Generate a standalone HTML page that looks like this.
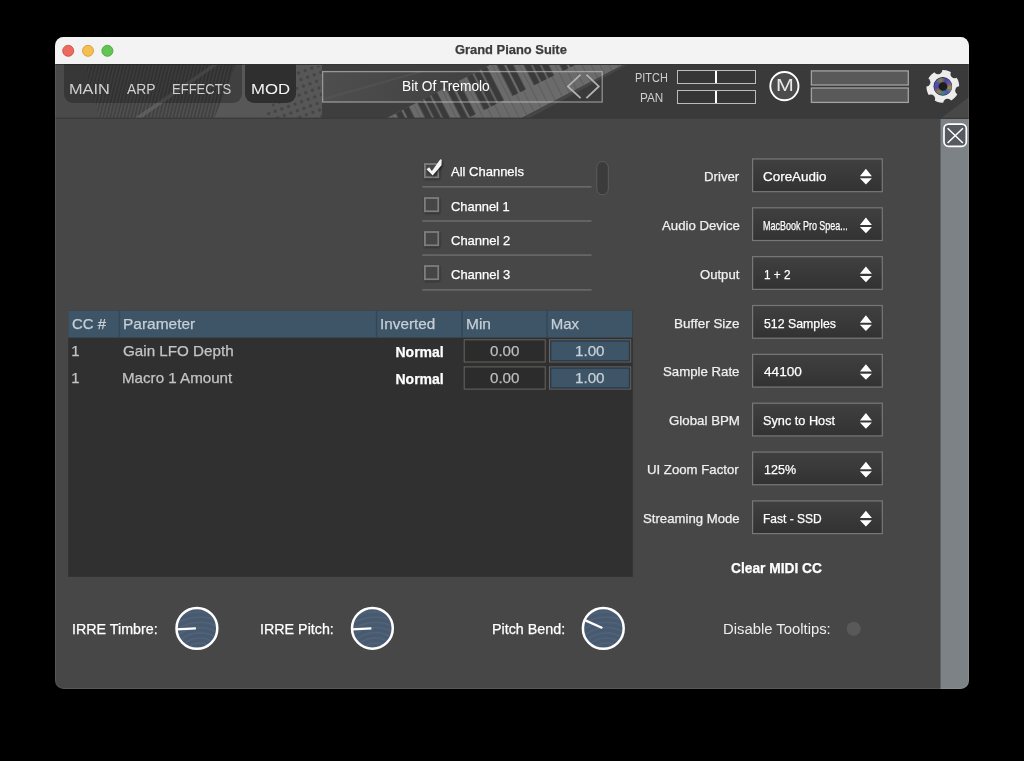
<!DOCTYPE html>
<html><head><meta charset="utf-8"><title>Grand Piano Suite</title>
<style>
html,body{margin:0;padding:0;background:#000;}
body{width:1024px;height:761px;position:relative;overflow:hidden;font-family:"Liberation Sans",sans-serif;}
.abs{position:absolute;box-sizing:border-box;}
.t{-webkit-text-stroke:0.25px currentColor;position:absolute;white-space:pre;transform-origin:0 0;font-family:"Liberation Sans",sans-serif;}
#win{left:55px;top:37px;width:914px;height:652px;border-radius:8.5px;overflow:hidden;background:#474747;}
#titlebar{left:0;top:0;width:914px;height:27px;background:#f3f3f3;}
#toolbar{left:0;top:27px;width:914px;height:55px;background:#3b3b3b;overflow:hidden;}
#strip{left:885px;top:82px;width:29px;height:570px;background:#7d8287;border-left:1px solid #5f6367;}
</style></head><body>
<div id="win" class="abs">
  <div id="titlebar" class="abs">
    <svg class="abs" style="left:0;top:0" width="70" height="27" viewBox="55 37 70 27">
      <circle cx="68.2" cy="50.8" r="5.5" fill="#ed6a5e" stroke="#d44d42" stroke-width="0.9"/>
      <circle cx="88" cy="50.8" r="5.5" fill="#f5bf4f" stroke="#d69e35" stroke-width="0.9"/>
      <circle cx="107.4" cy="50.8" r="5.5" fill="#61c554" stroke="#48a53c" stroke-width="0.9"/>
    </svg>
  </div>
  <div id="toolbar" class="abs">
    <svg class="abs" style="left:0;top:0" width="914" height="55" viewBox="55 64 914 55">
<defs>
<pattern id="wk" width="8" height="80" patternUnits="userSpaceOnUse" patternTransform="rotate(-27 500 90)">
<rect x="0" width="1" height="80" fill="#5d5d5d"/></pattern>
<pattern id="bk" width="56" height="200" patternUnits="userSpaceOnUse" patternTransform="rotate(-27 500 90)">
<rect x="4.5" width="6.3" height="200" fill="#3a3a3a"/><rect x="13" width="6.3" height="200" fill="#3a3a3a"/>
<rect x="28.5" width="6.3" height="200" fill="#3a3a3a"/><rect x="36.5" width="6.3" height="200" fill="#3a3a3a"/><rect x="44.5" width="6.3" height="200" fill="#3a3a3a"/></pattern>
<pattern id="str" width="3.4" height="80" patternUnits="userSpaceOnUse" patternTransform="rotate(14 150 90)">
<rect width="3.4" height="80" fill="#414141"/><rect x="0" width="1.4" height="80" fill="#525252"/></pattern>
<linearGradient id="boxg" x1="322" x2="480" y1="0" y2="0" gradientUnits="userSpaceOnUse"><stop offset="0" stop-color="#4e4e4e"/><stop offset="1" stop-color="#404040"/></linearGradient>
<pattern id="pins" width="7" height="7" patternUnits="userSpaceOnUse" patternTransform="rotate(-20 300 90)">
<circle cx="3.5" cy="3.5" r="1.7" fill="#444"/></pattern>
</defs>
<rect x="55" y="64" width="914" height="55" fill="#4a4a4a"/>
<polygon points="84,64 236,64 214,119 100,119" fill="url(#str)"/>
<polygon points="133,119 213,64 219,64 140,119" fill="#666" opacity=".7"/>
<polygon points="214,119 236,64 324,64 324,119" fill="#575757"/>
<polygon points="262,119 300,66 322,66 322,119" fill="url(#pins)"/>
<rect x="322" y="64" width="175" height="55" fill="#3e3e3e"/>
<rect x="322" y="71" width="170" height="31.5" fill="url(#boxg)"/>
<polygon points="322,98 420,71 426,71 322,101" fill="#585858" opacity=".5"/>
<polygon points="385,119 491.7,64 625,64 520,119" fill="#6b6b6b"/><polygon points="385,119 491.7,64 625,64 520,119" fill="url(#wk)"/><polygon points="385,119 491.7,64 577,64 466,119" fill="url(#bk)"/>
<polygon points="520,119 625,64 969,64 969,119" fill="#3a3a3a"/>
<polygon points="520,119 625,64 629,64 528,119" fill="#464646"/>
<polygon points="940,119 969,97 969,119" fill="#484848"/>
<rect x="55" y="64" width="914" height="1" fill="#353535"/>
<rect x="55" y="117.6" width="914" height="1.4" fill="#3b3b3b"/>
</svg>
<div class="abs" style="left:9.0px;top:0.0px;width:177.6px;height:38.8px;background:rgba(20,20,20,.34);border-radius:0 0 9px 9px;"></div>
<div class="abs" style="left:190.0px;top:0.0px;width:51.0px;height:39.0px;background:#2f2f2f;border-radius:0 0 9px 9px;"></div>
<svg class="abs" style="left:260px;top:0" width="300" height="50" viewBox="315 64 300 50"><rect x="322.6" y="71.6" width="279.6" height="30.4" fill="none" stroke="rgba(200,200,200,.6)" stroke-width="1.3"/></svg>
<svg class="abs" style="left:505px;top:5px" width="50" height="40" viewBox="560 69 50 40">
<path d="M580.6 74.6L567.9 86.4L580.6 98.2M586.4 74.6L598.8 86.4L586.4 98.2" stroke="#b2b2b2" stroke-width="1.8" fill="none"/></svg>
<div class="abs" style="left:622.0px;top:6.3px;width:79.4px;height:13.6px;border:1px solid #bcbcbc;background:#363636;"></div>
<div class="abs" style="left:660.4px;top:6.8px;width:2.0px;height:12.6px;background:#fff;"></div>
<div class="abs" style="left:622.0px;top:26.0px;width:79.4px;height:13.6px;border:1px solid #bcbcbc;background:#363636;"></div>
<div class="abs" style="left:660.4px;top:26.5px;width:2.0px;height:12.6px;background:#fff;"></div>
<svg class="abs" style="left:710px;top:3px" width="40" height="40" viewBox="765 67 40 40"><circle cx="784.4" cy="86.1" r="14.1" fill="#4c4c4c" stroke="#fff" stroke-width="1.9"/></svg>
<svg class="abs" style="left:750px;top:3px" width="110" height="40" viewBox="805 67 110 40"><rect x="811.4" y="70.9" width="96.9" height="14.1" fill="#595959" stroke="#a2a2a2" stroke-width="1.3"/><rect x="811.4" y="88" width="96.9" height="14.4" fill="#595959" stroke="#a2a2a2" stroke-width="1.3"/></svg>
<svg class="abs" style="left:865px;top:0" width="49" height="55" viewBox="920 64 49 55">
<defs><mask id="gm"><rect x="920" y="64" width="49" height="55" fill="#000"/><circle cx="942.8" cy="86.4" r="16.4" fill="#fff"/><circle cx="954.75" cy="74.03" r="4.3" fill="#000"/><circle cx="959.49" cy="90.56" r="4.3" fill="#000"/><circle cx="947.54" cy="102.93" r="4.3" fill="#000"/><circle cx="930.85" cy="98.77" r="4.3" fill="#000"/><circle cx="926.11" cy="82.24" r="4.3" fill="#000"/><circle cx="938.06" cy="69.87" r="4.3" fill="#000"/></mask></defs>
<rect x="920" y="64" width="49" height="55" fill="#ececec" mask="url(#gm)"/>
<circle cx="942.8" cy="86.4" r="9.3" fill="#23233f"/></svg>
<div class="abs" style="left:879.0px;top:13.6px;width:17.6px;height:17.6px;border-radius:50%;background:radial-gradient(circle,#1c1c1c 0,#1c1c1c 30%,rgba(28,28,28,0) 40%,rgba(28,28,40,0) 80%,rgba(25,25,50,.8) 100%),conic-gradient(from 20deg,#4446a4,#6a52a0,#9a8a44,#5058b0,#3a7a94,#8c7a48,#5a44a0,#4456b0,#94803e,#4446a4);"></div>
  </div>
  <div id="strip" class="abs"></div>
  <div class="abs" style="left:0;top:0;width:914px;height:652px;border-radius:8.5px;border:1px solid rgba(255,255,255,.09);"></div>
</div>
<svg class="abs" style="left:940px;top:120px" width="30" height="30" viewBox="940 120 30 30">
<rect x="944" y="124.1" width="22.3" height="22.2" rx="4.5" fill="#555a60" stroke="#fff" stroke-width="1.7"/>
<path d="M947.6 128.3L962.9 143M962.9 128.3L947.6 143" stroke="#fff" stroke-width="1.5" fill="none"/></svg>
<svg class="abs" style="left:415px;top:150px" width="185" height="145" viewBox="415 150 185 145"><defs><filter id="sh" x="-30%" y="-30%" width="170%" height="170%"><feGaussianBlur stdDeviation="0.9"/></filter></defs><rect x="425.6" y="165.10" width="13.4" height="13.3" fill="none" stroke="rgba(0,0,0,.45)" stroke-width="2" filter="url(#sh)"/><rect x="424.9" y="164.00" width="13.4" height="13.3" fill="#464646" stroke="#7e7e7e" stroke-width="1.8"/><rect x="422.3" y="186.00" width="169.2" height="1.6" fill="#6a6a6a"/><rect x="425.6" y="199.10" width="13.4" height="13.3" fill="none" stroke="rgba(0,0,0,.45)" stroke-width="2" filter="url(#sh)"/><rect x="424.9" y="198.00" width="13.4" height="13.3" fill="#464646" stroke="#7e7e7e" stroke-width="1.8"/><rect x="422.3" y="220.20" width="169.2" height="1.6" fill="#6a6a6a"/><rect x="425.6" y="233.10" width="13.4" height="13.3" fill="none" stroke="rgba(0,0,0,.45)" stroke-width="2" filter="url(#sh)"/><rect x="424.9" y="232.00" width="13.4" height="13.3" fill="#464646" stroke="#7e7e7e" stroke-width="1.8"/><rect x="422.3" y="254.30" width="169.2" height="1.6" fill="#6a6a6a"/><rect x="425.6" y="267.10" width="13.4" height="13.3" fill="none" stroke="rgba(0,0,0,.45)" stroke-width="2" filter="url(#sh)"/><rect x="424.9" y="266.00" width="13.4" height="13.3" fill="#464646" stroke="#7e7e7e" stroke-width="1.8"/><rect x="422.3" y="289.10" width="169.2" height="1.6" fill="#6a6a6a"/><polygon points="426.5,169.3 429.2,167.3 431.9,171.0 440.3,159.2 441.7,159.7 441.5,165.3 432.7,175.4" fill="rgba(0,0,0,.55)" transform="translate(0.8,1.6)" filter="url(#sh)"/><polygon points="426.5,169.3 429.2,167.3 431.9,171.0 440.3,159.2 441.7,159.7 441.5,165.3 432.7,175.4" fill="#f4f4f4"/></svg>
<svg class="abs" style="left:590px;top:155px" width="25" height="46" viewBox="590 155 25 46"><rect x="596.8" y="161.5" width="11.5" height="33.3" rx="5.75" fill="#3b3b3b" stroke="#5c5c5c" stroke-width="1"/></svg>
<svg class="abs" style="left:0;top:0" width="0" height="0"><defs><linearGradient id="ddg" x1="0" y1="0" x2="0" y2="1"><stop offset="0" stop-color="#404040"/><stop offset="1" stop-color="#323232"/></linearGradient></defs></svg>
<svg class="abs" style="left:748px;top:156px" width="140" height="40" viewBox="748 156 140 40"><rect x="752.6" y="158.95" width="129.7" height="32.7" fill="url(#ddg)" stroke="#787878" stroke-width="1.2"/><path d="M865.9 168.75L871.9 176.15H859.9Z M859.9 178.25H871.9L865.9 184.45Z" fill="#fff"/></svg>
<svg class="abs" style="left:748px;top:205px" width="140" height="40" viewBox="748 205 140 40"><rect x="752.6" y="207.80" width="129.7" height="32.7" fill="url(#ddg)" stroke="#787878" stroke-width="1.2"/><path d="M865.9 217.60L871.9 225.00H859.9Z M859.9 227.10H871.9L865.9 233.30Z" fill="#fff"/></svg>
<svg class="abs" style="left:748px;top:254px" width="140" height="40" viewBox="748 254 140 40"><rect x="752.6" y="256.65" width="129.7" height="32.7" fill="url(#ddg)" stroke="#787878" stroke-width="1.2"/><path d="M865.9 266.45L871.9 273.85H859.9Z M859.9 275.95H871.9L865.9 282.15Z" fill="#fff"/></svg>
<svg class="abs" style="left:748px;top:302px" width="140" height="40" viewBox="748 302 140 40"><rect x="752.6" y="305.50" width="129.7" height="32.7" fill="url(#ddg)" stroke="#787878" stroke-width="1.2"/><path d="M865.9 315.30L871.9 322.70H859.9Z M859.9 324.80H871.9L865.9 331.00Z" fill="#fff"/></svg>
<svg class="abs" style="left:748px;top:351px" width="140" height="40" viewBox="748 351 140 40"><rect x="752.6" y="354.35" width="129.7" height="32.7" fill="url(#ddg)" stroke="#787878" stroke-width="1.2"/><path d="M865.9 364.15L871.9 371.55H859.9Z M859.9 373.65H871.9L865.9 379.85Z" fill="#fff"/></svg>
<svg class="abs" style="left:748px;top:400px" width="140" height="40" viewBox="748 400 140 40"><rect x="752.6" y="403.20" width="129.7" height="32.7" fill="url(#ddg)" stroke="#787878" stroke-width="1.2"/><path d="M865.9 413.00L871.9 420.40H859.9Z M859.9 422.50H871.9L865.9 428.70Z" fill="#fff"/></svg>
<svg class="abs" style="left:748px;top:449px" width="140" height="40" viewBox="748 449 140 40"><rect x="752.6" y="452.05" width="129.7" height="32.7" fill="url(#ddg)" stroke="#787878" stroke-width="1.2"/><path d="M865.9 461.85L871.9 469.25H859.9Z M859.9 471.35H871.9L865.9 477.55Z" fill="#fff"/></svg>
<svg class="abs" style="left:748px;top:498px" width="140" height="40" viewBox="748 498 140 40"><rect x="752.6" y="500.90" width="129.7" height="32.7" fill="url(#ddg)" stroke="#787878" stroke-width="1.2"/><path d="M865.9 510.70L871.9 518.10H859.9Z M859.9 520.20H871.9L865.9 526.40Z" fill="#fff"/></svg>
<svg class="abs" style="left:60px;top:305px" width="580" height="280" viewBox="60 305 580 280"><rect x="68.2" y="310.6" width="564.6" height="266.2" fill="#303030"/><rect x="68.2" y="310.6" width="564.2" height="27" fill="#3e5568"/><rect x="118.7" y="310.6" width="1.4" height="27" fill="#33475a"/><rect x="375.8" y="310.6" width="1.4" height="27" fill="#33475a"/><rect x="461.2" y="310.6" width="1.4" height="27" fill="#33475a"/><rect x="546.3" y="310.6" width="1.4" height="27" fill="#33475a"/><rect x="464.2" y="339.8" width="81" height="22.2" fill="#2c2c2c" stroke="#69655f" stroke-width="1"/><rect x="549.5" y="339.8" width="81.2" height="22.2" fill="#3e5568" stroke="#69655f" stroke-width="1"/><rect x="550.7" y="341.0" width="78.8" height="19.8" fill="none" stroke="#2c3a48" stroke-width="1.3"/><rect x="464.2" y="366.9" width="81" height="22.2" fill="#2c2c2c" stroke="#69655f" stroke-width="1"/><rect x="549.5" y="366.9" width="81.2" height="22.2" fill="#3e5568" stroke="#69655f" stroke-width="1"/><rect x="550.7" y="368.1" width="78.8" height="19.8" fill="none" stroke="#2c3a48" stroke-width="1.3"/></svg>
<svg class="abs" style="left:172px;top:604px" width="48" height="48" viewBox="172 604 48 48">
<defs><clipPath id="k1"><circle cx="196.9" cy="628.4" r="20.4"/></clipPath></defs>
<circle cx="196.9" cy="628.4" r="20.4" fill="#485a70"/>
<g clip-path="url(#k1)"><circle cx="199.9" cy="662.4" r="14.0" stroke="#607487" stroke-width="1.7" fill="none" opacity=".32"/><circle cx="199.9" cy="662.4" r="19.2" stroke="#607487" stroke-width="1.7" fill="none" opacity=".32"/><circle cx="199.9" cy="662.4" r="24.4" stroke="#607487" stroke-width="1.7" fill="none" opacity=".32"/><circle cx="199.9" cy="662.4" r="29.6" stroke="#607487" stroke-width="1.7" fill="none" opacity=".32"/><circle cx="199.9" cy="662.4" r="34.8" stroke="#607487" stroke-width="1.7" fill="none" opacity=".32"/><circle cx="199.9" cy="662.4" r="40.0" stroke="#607487" stroke-width="1.7" fill="none" opacity=".32"/><circle cx="199.9" cy="662.4" r="45.2" stroke="#607487" stroke-width="1.7" fill="none" opacity=".32"/><circle cx="199.9" cy="662.4" r="50.4" stroke="#607487" stroke-width="1.7" fill="none" opacity=".32"/><circle cx="199.9" cy="662.4" r="55.6" stroke="#607487" stroke-width="1.7" fill="none" opacity=".32"/><circle cx="199.9" cy="662.4" r="60.8" stroke="#607487" stroke-width="1.7" fill="none" opacity=".32"/></g>
<circle cx="196.9" cy="628.4" r="20.4" fill="none" stroke="#fff" stroke-width="2.5"/>
<path d="M195.90 628.45L176.63 629.46" stroke="#fff" stroke-width="2.3"/></svg>
<svg class="abs" style="left:348px;top:604px" width="48" height="48" viewBox="348 604 48 48">
<defs><clipPath id="k2"><circle cx="372.4" cy="628.3" r="20.4"/></clipPath></defs>
<circle cx="372.4" cy="628.3" r="20.4" fill="#485a70"/>
<g clip-path="url(#k2)"><circle cx="375.4" cy="662.3" r="14.0" stroke="#607487" stroke-width="1.7" fill="none" opacity=".32"/><circle cx="375.4" cy="662.3" r="19.2" stroke="#607487" stroke-width="1.7" fill="none" opacity=".32"/><circle cx="375.4" cy="662.3" r="24.4" stroke="#607487" stroke-width="1.7" fill="none" opacity=".32"/><circle cx="375.4" cy="662.3" r="29.6" stroke="#607487" stroke-width="1.7" fill="none" opacity=".32"/><circle cx="375.4" cy="662.3" r="34.8" stroke="#607487" stroke-width="1.7" fill="none" opacity=".32"/><circle cx="375.4" cy="662.3" r="40.0" stroke="#607487" stroke-width="1.7" fill="none" opacity=".32"/><circle cx="375.4" cy="662.3" r="45.2" stroke="#607487" stroke-width="1.7" fill="none" opacity=".32"/><circle cx="375.4" cy="662.3" r="50.4" stroke="#607487" stroke-width="1.7" fill="none" opacity=".32"/><circle cx="375.4" cy="662.3" r="55.6" stroke="#607487" stroke-width="1.7" fill="none" opacity=".32"/><circle cx="375.4" cy="662.3" r="60.8" stroke="#607487" stroke-width="1.7" fill="none" opacity=".32"/></g>
<circle cx="372.4" cy="628.3" r="20.4" fill="none" stroke="#fff" stroke-width="2.5"/>
<path d="M371.40 628.35L352.13 629.36" stroke="#fff" stroke-width="2.3"/></svg>
<svg class="abs" style="left:579px;top:604px" width="48" height="48" viewBox="579 604 48 48">
<defs><clipPath id="k3"><circle cx="603.3" cy="628.4" r="20.4"/></clipPath></defs>
<circle cx="603.3" cy="628.4" r="20.4" fill="#485a70"/>
<g clip-path="url(#k3)"><circle cx="606.3" cy="662.4" r="14.0" stroke="#607487" stroke-width="1.7" fill="none" opacity=".32"/><circle cx="606.3" cy="662.4" r="19.2" stroke="#607487" stroke-width="1.7" fill="none" opacity=".32"/><circle cx="606.3" cy="662.4" r="24.4" stroke="#607487" stroke-width="1.7" fill="none" opacity=".32"/><circle cx="606.3" cy="662.4" r="29.6" stroke="#607487" stroke-width="1.7" fill="none" opacity=".32"/><circle cx="606.3" cy="662.4" r="34.8" stroke="#607487" stroke-width="1.7" fill="none" opacity=".32"/><circle cx="606.3" cy="662.4" r="40.0" stroke="#607487" stroke-width="1.7" fill="none" opacity=".32"/><circle cx="606.3" cy="662.4" r="45.2" stroke="#607487" stroke-width="1.7" fill="none" opacity=".32"/><circle cx="606.3" cy="662.4" r="50.4" stroke="#607487" stroke-width="1.7" fill="none" opacity=".32"/><circle cx="606.3" cy="662.4" r="55.6" stroke="#607487" stroke-width="1.7" fill="none" opacity=".32"/><circle cx="606.3" cy="662.4" r="60.8" stroke="#607487" stroke-width="1.7" fill="none" opacity=".32"/></g>
<circle cx="603.3" cy="628.4" r="20.4" fill="none" stroke="#fff" stroke-width="2.5"/>
<path d="M602.39 627.99L584.76 620.14" stroke="#fff" stroke-width="2.3"/></svg>
<svg class="abs" style="left:840px;top:615px" width="28" height="28" viewBox="840 615 28 28"><circle cx="853.7" cy="628.8" r="7.1" fill="#595959"/></svg>
<div id="txt" style="position:absolute;left:0;top:0;width:1024px;height:761px;will-change:transform;">
<span class="t" style="left:455.3px;top:42px;font-size:13px;line-height:15px;color:#3b3b3b;font-weight:700;transform:scaleX(0.9924);">Grand Piano Suite</span>
<span class="t" style="left:69.4px;top:80px;font-size:15px;line-height:17px;color:#d0d0d0;font-weight:400;transform:scaleX(1.0878);-webkit-text-stroke:0;">MAIN</span>
<span class="t" style="left:126.8px;top:80px;font-size:15px;line-height:17px;color:#d0d0d0;font-weight:400;transform:scaleX(0.9242);-webkit-text-stroke:0;">ARP</span>
<span class="t" style="left:172.1px;top:80px;font-size:15px;line-height:17px;color:#d0d0d0;font-weight:400;transform:scaleX(0.8674);-webkit-text-stroke:0;">EFFECTS</span>
<span class="t" style="left:250.6px;top:80px;font-size:15px;line-height:17px;color:#f4f4f4;font-weight:400;transform:scaleX(1.1153);-webkit-text-stroke:0;">MOD</span>
<span class="t" style="left:402.1px;top:78px;font-size:14.5px;line-height:16px;color:#ffffff;font-weight:400;transform:scaleX(0.9471);-webkit-text-stroke:0;">Bit Of Tremolo</span>
<span class="t" style="left:635.0px;top:71px;font-size:12px;line-height:14px;color:#cfcfcf;font-weight:400;transform:scaleX(0.9113);-webkit-text-stroke:0;">PITCH</span>
<span class="t" style="left:639.8px;top:91px;font-size:12px;line-height:14px;color:#cfcfcf;font-weight:400;transform:scaleX(0.9776);-webkit-text-stroke:0;">PAN</span>
<span class="t" style="left:775.6px;top:76px;font-size:17px;line-height:19px;color:#e8e8e8;font-weight:400;transform:scaleX(1.2583);-webkit-text-stroke:0;">M</span>
<span class="t" style="left:451.0px;top:164px;font-size:13px;line-height:15px;color:#ffffff;font-weight:400;">All Channels</span>
<span class="t" style="left:451.0px;top:199px;font-size:13px;line-height:15px;color:#ffffff;font-weight:400;transform:scaleX(0.9909);">Channel 1</span>
<span class="t" style="left:451.0px;top:233px;font-size:13px;line-height:15px;color:#ffffff;font-weight:400;">Channel 2</span>
<span class="t" style="left:451.0px;top:267px;font-size:13px;line-height:15px;color:#ffffff;font-weight:400;">Channel 3</span>
<span class="t" style="left:703.5px;top:169px;font-size:13px;line-height:15px;color:#f0f0f0;font-weight:400;transform:scaleX(1.0164);">Driver</span>
<span class="t" style="left:763.3px;top:169px;font-size:13px;line-height:15px;color:#ffffff;font-weight:400;transform:scaleX(1.0327);">CoreAudio</span>
<span class="t" style="left:661.8px;top:218px;font-size:13px;line-height:15px;color:#f0f0f0;font-weight:400;transform:scaleX(1.0161);">Audio Device</span>
<span class="t" style="left:762.6px;top:218px;font-size:13px;line-height:15px;color:#ffffff;font-weight:400;transform:scaleX(0.6904);">MacBook Pro Spea...</span>
<span class="t" style="left:699.7px;top:267px;font-size:13px;line-height:15px;color:#f0f0f0;font-weight:400;transform:scaleX(1.0073);">Output</span>
<span class="t" style="left:764.3px;top:267px;font-size:13px;line-height:15px;color:#ffffff;font-weight:400;transform:scaleX(0.9055);">1 + 2</span>
<span class="t" style="left:674.1px;top:316px;font-size:13px;line-height:15px;color:#f0f0f0;font-weight:400;transform:scaleX(1.0351);">Buffer Size</span>
<span class="t" style="left:764.0px;top:316px;font-size:13px;line-height:15px;color:#ffffff;font-weight:400;transform:scaleX(0.9479);">512 Samples</span>
<span class="t" style="left:663.2px;top:364px;font-size:13px;line-height:15px;color:#f0f0f0;font-weight:400;transform:scaleX(1.0171);">Sample Rate</span>
<span class="t" style="left:764.0px;top:364px;font-size:13px;line-height:15px;color:#ffffff;font-weight:400;transform:scaleX(1.0468);">44100</span>
<span class="t" style="left:669.3px;top:413px;font-size:13px;line-height:15px;color:#f0f0f0;font-weight:400;transform:scaleX(1.0229);">Global BPM</span>
<span class="t" style="left:763.3px;top:413px;font-size:13px;line-height:15px;color:#ffffff;font-weight:400;transform:scaleX(0.9773);">Sync to Host</span>
<span class="t" style="left:647.1px;top:462px;font-size:13px;line-height:15px;color:#f0f0f0;font-weight:400;transform:scaleX(1.0148);">UI Zoom Factor</span>
<span class="t" style="left:764.3px;top:462px;font-size:13px;line-height:15px;color:#ffffff;font-weight:400;transform:scaleX(0.9647);">125%</span>
<span class="t" style="left:643.0px;top:511px;font-size:13px;line-height:15px;color:#f0f0f0;font-weight:400;transform:scaleX(1.0131);">Streaming Mode</span>
<span class="t" style="left:763.1px;top:511px;font-size:13px;line-height:15px;color:#ffffff;font-weight:400;transform:scaleX(0.9232);">Fast - SSD</span>
<span class="t" style="left:730.5px;top:560px;font-size:14.5px;line-height:16px;color:#ffffff;font-weight:700;transform:scaleX(0.9481);">Clear MIDI CC</span>
<span class="t" style="left:72.3px;top:315px;font-size:15px;line-height:17px;color:#c6cfd7;font-weight:400;transform:scaleX(0.9933);">CC #</span>
<span class="t" style="left:123.1px;top:315px;font-size:15px;line-height:17px;color:#c6cfd7;font-weight:400;transform:scaleX(1.0314);">Parameter</span>
<span class="t" style="left:380.1px;top:315px;font-size:15px;line-height:17px;color:#c6cfd7;font-weight:400;transform:scaleX(1.0197);">Inverted</span>
<span class="t" style="left:465.7px;top:315px;font-size:15px;line-height:17px;color:#c6cfd7;font-weight:400;transform:scaleX(1.0338);">Min</span>
<span class="t" style="left:550.7px;top:315px;font-size:15px;line-height:17px;color:#c6cfd7;font-weight:400;">Max</span>
<span class="t" style="left:71.3px;top:342px;font-size:15px;line-height:17px;color:#c4c4c4;font-weight:400;">1</span>
<span class="t" style="left:123.3px;top:342px;font-size:15px;line-height:17px;color:#c4c4c4;font-weight:400;transform:scaleX(1.0131);">Gain LFO Depth</span>
<span class="t" style="left:71.3px;top:369px;font-size:15px;line-height:17px;color:#c4c4c4;font-weight:400;">1</span>
<span class="t" style="left:122.3px;top:369px;font-size:15px;line-height:17px;color:#c4c4c4;font-weight:400;transform:scaleX(1.0093);">Macro 1 Amount</span>
<span class="t" style="left:395.5px;top:344px;font-size:14px;line-height:16px;color:#ffffff;font-weight:700;">Normal</span>
<span class="t" style="left:395.5px;top:371px;font-size:14px;line-height:16px;color:#ffffff;font-weight:700;">Normal</span>
<span class="t" style="left:490.3px;top:342px;font-size:15px;line-height:17px;color:#bdbdbd;font-weight:400;transform:scaleX(1.0086);">0.00</span>
<span class="t" style="left:490.3px;top:369px;font-size:15px;line-height:17px;color:#bdbdbd;font-weight:400;transform:scaleX(1.0086);">0.00</span>
<span class="t" style="left:575.4px;top:342px;font-size:15px;line-height:17px;color:#c8d0d8;font-weight:400;transform:scaleX(1.0125);">1.00</span>
<span class="t" style="left:575.4px;top:369px;font-size:15px;line-height:17px;color:#c8d0d8;font-weight:400;transform:scaleX(1.0125);">1.00</span>
<span class="t" style="left:71.6px;top:621px;font-size:14px;line-height:16px;color:#ffffff;font-weight:400;transform:scaleX(1.0197);">IRRE Timbre:</span>
<span class="t" style="left:260.3px;top:621px;font-size:14px;line-height:16px;color:#ffffff;font-weight:400;transform:scaleX(1.0204);">IRRE Pitch:</span>
<span class="t" style="left:491.7px;top:621px;font-size:14px;line-height:16px;color:#ffffff;font-weight:400;transform:scaleX(1.0228);">Pitch Bend:</span>
<span class="t" style="left:722.9px;top:621px;font-size:14px;line-height:16px;color:#ececec;font-weight:400;transform:scaleX(1.0595);-webkit-text-stroke:0;">Disable Tooltips:</span>
</div>
</body></html>
